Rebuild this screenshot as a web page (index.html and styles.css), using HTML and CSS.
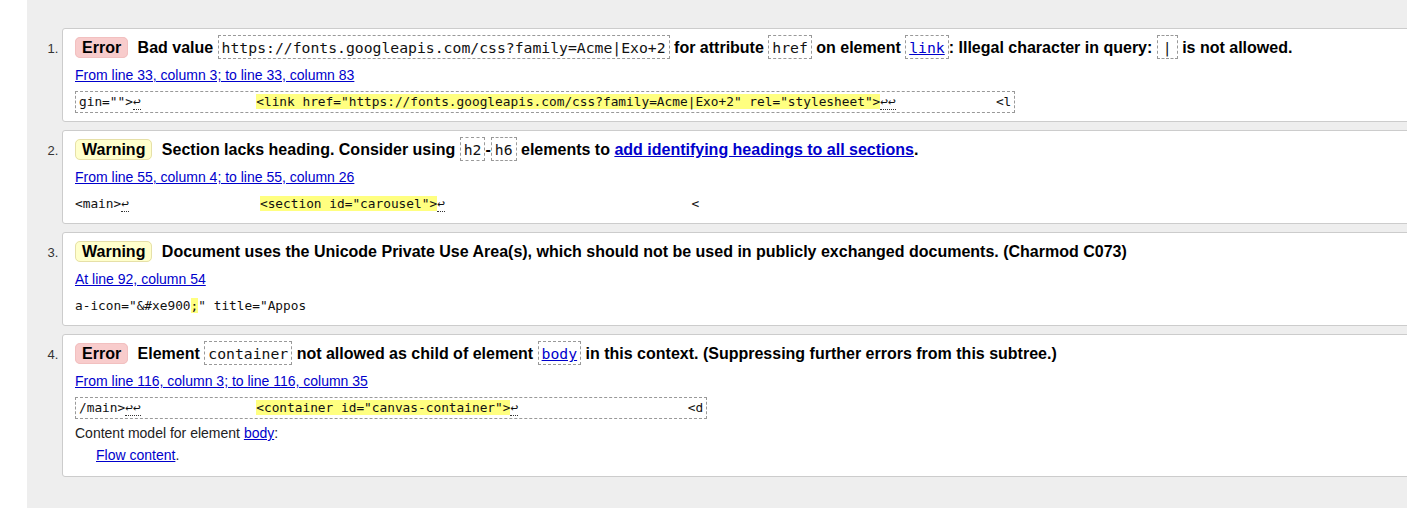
FILE: index.html
```html
<!DOCTYPE html>
<html lang="en">
<head>
<meta charset="utf-8">
<title>Validation results</title>
<link rel="stylesheet" href="styles.css">
</head>
<body>
<div class="page">
  <div class="gutter"></div>
  <div class="results">
    <ol class="messages">
      <li class="card error">
        <p class="msg"><strong class="badge">Error</strong> <span>Bad value <code>https://fonts.googleapis.com/css?family=Acme|Exo+2</code> for attribute <code>href</code> on element <a href="#"><code>link</code></a>: Illegal character in query: <code class="bar">|</code> is not allowed.</span></p>
        <p class="location"><a href="#">From line 33, column 3; to line 33, column 83</a></p>
        <p class="extract"><code>gin=""&gt;<span class="lf">↩</span>               <b>&lt;link href="https://fonts.googleapis.com/css?family=Acme|Exo+2" rel="stylesheet"&gt;</b><span class="lf">↩↩</span>             &lt;l</code></p>
      </li>
      <li class="card warning">
        <p class="msg"><strong class="badge">Warning</strong> <span>Section lacks heading. Consider using <code>h2</code>-<code>h6</code> elements to <a href="#">add identifying headings to all sections</a>.</span></p>
        <p class="location"><a href="#">From line 55, column 4; to line 55, column 26</a></p>
        <p class="extract"><code>&lt;main&gt;<span class="lf">↩</span>                 <b>&lt;section id="carousel"&gt;</b><span class="lf">↩</span>                                &lt;</code></p>
      </li>
      <li class="card warning">
        <p class="msg"><strong class="badge">Warning</strong> <span>Document uses the Unicode Private Use Area(s), which should not be used in publicly exchanged documents. (Charmod C073)</span></p>
        <p class="location"><a href="#">At line 92, column 54</a></p>
        <p class="extract"><code>a-icon="&amp;#xe900<b>;</b>" title="Appos</code></p>
      </li>
      <li class="card error">
        <p class="msg"><strong class="badge">Error</strong> <span>Element <code>container</code> not allowed as child of element <a href="#"><code>body</code></a> in this context. (Suppressing further errors from this subtree.)</span></p>
        <p class="location"><a href="#">From line 116, column 3; to line 116, column 35</a></p>
        <p class="extract"><code>/main&gt;<span class="lf">↩↩</span>               <b>&lt;container id="canvas-container"&gt;</b><span class="lf">↩</span>                      &lt;d</code></p>
        <dl class="model">
          <dt>Content model for element <a href="#">body</a>:</dt>
          <dd><a href="#">Flow content</a>.</dd>
        </dl>
      </li>
    </ol>
  </div>
</div>
</body>
</html>
```
FILE: styles.css
```css
html, body {
  margin: 0;
  padding: 0;
  background: #fff;
}

body {
  font-family: "Liberation Sans", Arial, sans-serif;
  color: #000;
}

.page {
  display: flex;
  height: 508px;
  overflow: hidden;
}

.gutter {
  width: 27px;
  flex: none;
  background: #fff;
}

.results {
  flex: 1;
  background: #eee;
  padding-top: 28px;
  overflow: hidden;
}

.messages {
  margin: 0;
  padding: 0 0 0 35px;
  width: 1420px;
}

.card {
  background: #fff;
  border: 1px solid #ccc;
  border-radius: 3px;
  padding: 7px 12px 9px;
  margin-bottom: 8px;
}

.card::marker {
  font-size: 13px;
  color: #333;
}

.card p,
.card dl,
.card dd {
  margin: 0;
}

a {
  color: #0000cc;
  text-decoration: underline;
}

.msg {
  font-size: 16px;
  font-weight: bold;
  line-height: 24px;
  white-space: nowrap;
}

.badge {
  padding: 1px 6px;
  border: 1px solid;
  border-radius: 5px;
  margin-right: 5px;
}

.error .badge {
  background: #f8cccc;
  border-color: #f2c0c0;
}

.warning .badge {
  background: #ffffcc;
  border-color: #e6e0a8;
}

.msg code {
  font-family: "DejaVu Sans Mono", "Liberation Mono", monospace;
  font-size: 14.75px;
  font-weight: normal;
  color: #111;
  border: 1px dashed #999;
  padding: 3px 3px 2px;
}

.msg code.bar {
  padding: 3px 5px 2px;
}

.msg a code {
  color: #0000cc;
}

.location {
  font-size: 14px;
  line-height: 18px;
  margin-top: 6px !important;
}

.extract {
  margin-top: 6px !important;
  line-height: 22px;
  height: 22px;
  white-space: pre;
}

.extract code {
  font-family: "DejaVu Sans Mono", "Liberation Mono", monospace;
  font-size: 12.8px;
  color: #111;
}

.error .extract code {
  display: inline-block;
  line-height: 20px;
  border: 1px dashed #999;
  padding: 0 3px;
}

.extract b {
  font-weight: normal;
  background: #ffff80;
}

.lf {
  border-bottom: 1px dotted #333;
}

.model {
  font-size: 14px;
  line-height: 18px;
  margin: 6px 0 3px !important;
  color: #222;
}

.model dd {
  margin: 4px 0 0 21px !important;
}
```
